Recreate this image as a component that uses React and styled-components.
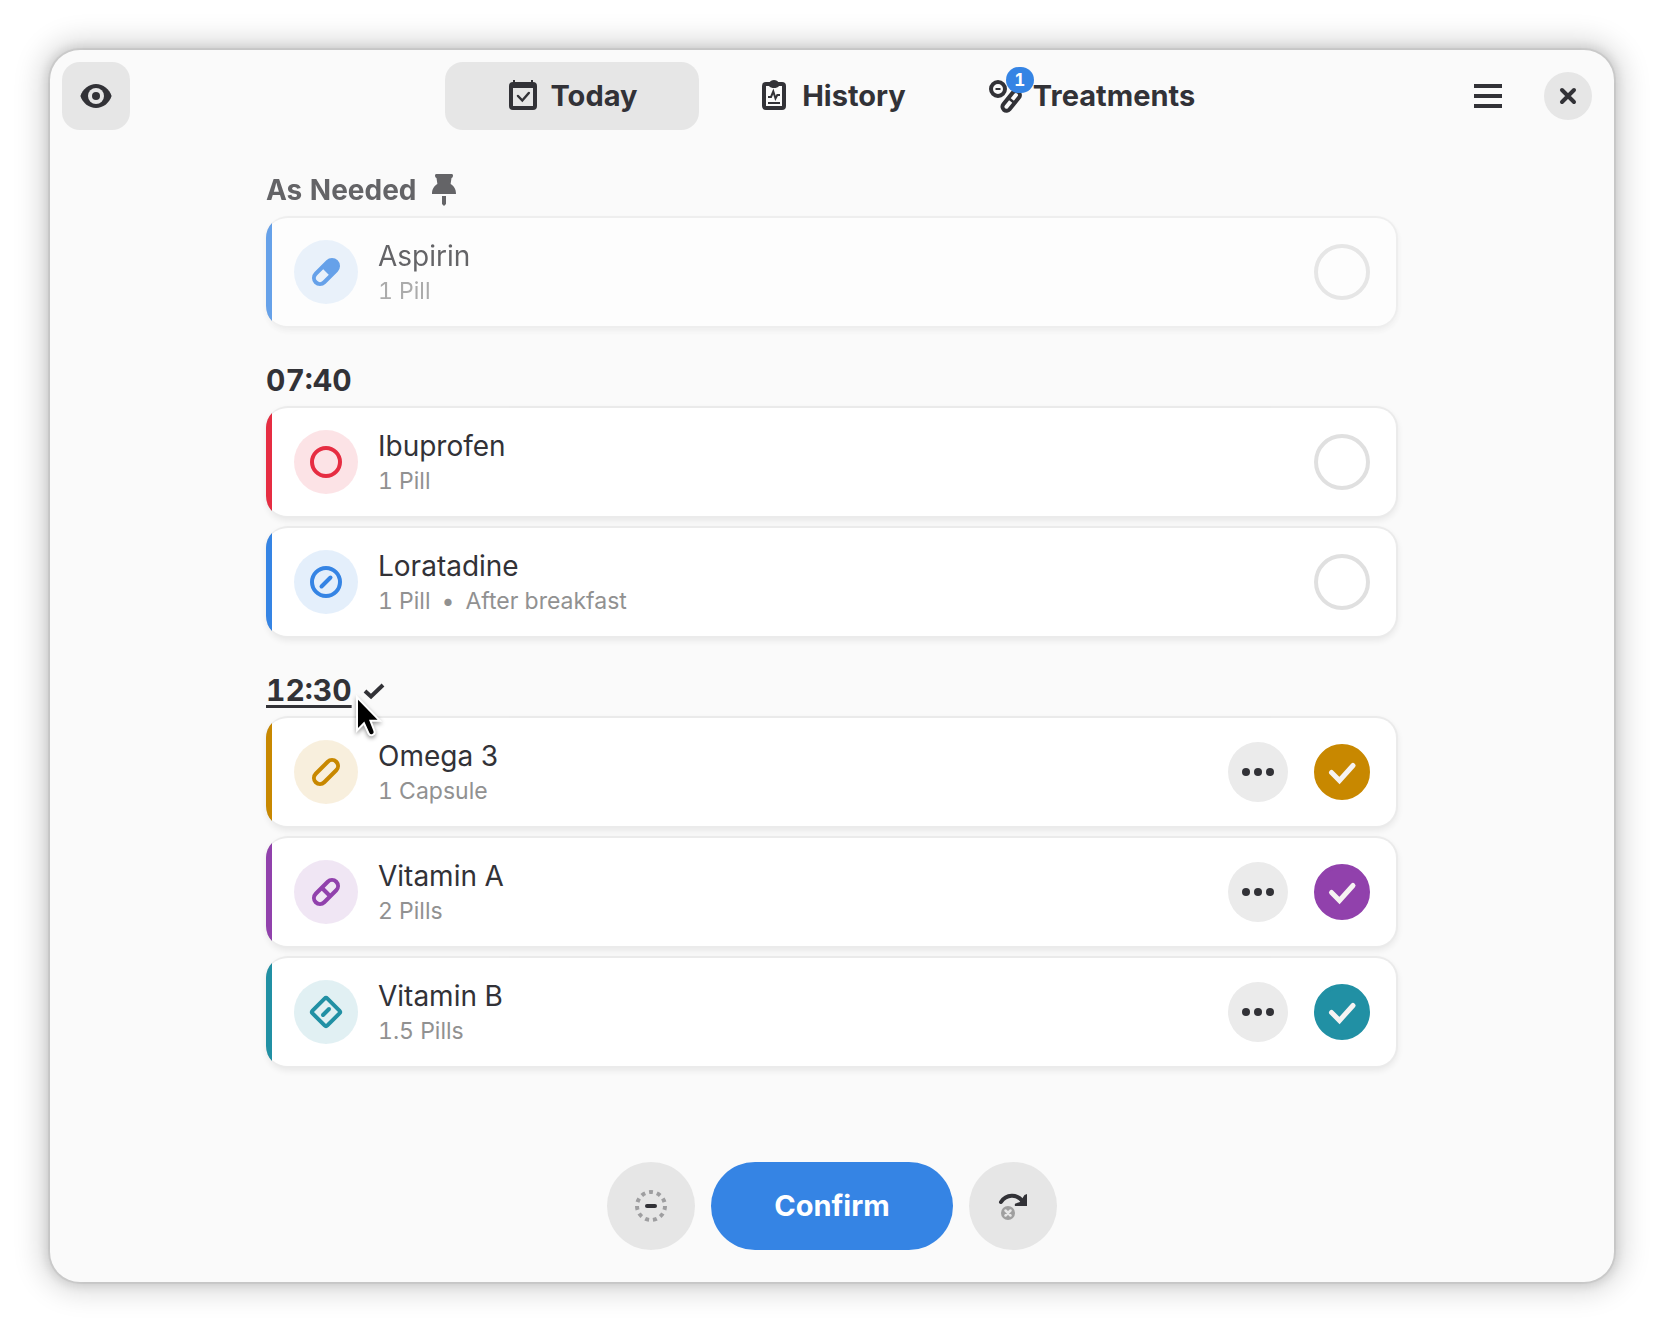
// External imports
import React, { useState } from "react"
import styled, { createGlobalStyle } from "styled-components"

// Constants
const font = `Inter, "Liberation Sans", sans-serif`

const colors = {
  text: "#323237",
  window: "#fafafa",
  button: "#e6e6e6",
  accent: "#3584e4",
}

const GlobalStyle = createGlobalStyle`
  * {
    box-sizing: border-box;
  }
  body {
    margin: 0;
    background: #ffffff;
    color: ${colors.text};
    font-family: ${font};
    font-size: 29px;
    line-height: 36px;
    font-variant-numeric: tabular-nums;
  }
  button {
    border: none;
    padding: 0;
    color: inherit;
    font: inherit;
    font-variant-numeric: inherit;
    cursor: pointer;
  }
  svg {
    display: block;
    flex: none;
    overflow: visible;
  }
`

// Styled components
const Page = styled.div`
  min-height: 100vh;
  padding: 50px;
  display: flex;
`

const Window = styled.div`
  flex: 1;
  display: flex;
  flex-direction: column;
  background: ${colors.window};
  border-radius: 30px;
  box-shadow:
    0 0 28px 10px rgba(0, 0, 0, 0.15),
    0 0 10px 4px rgba(0, 0, 0, 0.1),
    0 0 0 2px rgba(0, 0, 0, 0.05);
`

const Header = styled.header`
  display: grid;
  grid-template-columns: 1fr auto 1fr;
  align-items: center;
  padding: 12px;
`

const HeaderEnd = styled.div`
  display: flex;
  justify-content: flex-end;
  align-items: center;
  gap: 22px;
  padding-right: 10px;
`

const IconButton = styled.button`
  display: grid;
  place-items: center;
  width: 68px;
  height: 68px;
  border-radius: 18px;
  background: ${props => (props.$flat ? "none" : colors.button)};
`

const CloseButton = styled(IconButton)`
  width: 48px;
  height: 48px;
  border-radius: 50%;
`

const Tabs = styled.nav`
  display: flex;
  gap: 6px;
`

const Tab = styled.button`
  display: flex;
  align-items: center;
  justify-content: center;
  gap: 12px;
  width: 254px;
  height: 68px;
  border-radius: 18px;
  font-weight: 700;
  background: ${props => (props.$active ? colors.button : "none")};
`

const TabIcon = styled.span`
  position: relative;
`

const Badge = styled.span`
  position: absolute;
  top: -13px;
  left: 17px;
  width: 28px;
  height: 26px;
  border-radius: 13px;
  background: ${colors.accent};
  color: white;
  font-size: 17px;
  line-height: 26px;
  text-align: center;
`

const Content = styled.main`
  flex: 1;
  display: flex;
  flex-direction: column;
  gap: 34px;
  width: 100%;
  max-width: 1132px;
  margin: 0 auto;
  padding-top: 30px;
`

const Group = styled.section`
  display: flex;
  flex-direction: column;
  gap: 8px;
`

const GroupHeader = styled.div`
  position: relative;
  display: flex;
  align-items: center;
  gap: 12px;
  opacity: ${props => (props.$dim ? 0.75 : 1)};
`

const GroupTitle = styled.h2`
  margin: 0;
  font-size: ${props => (props.$pinned ? "28px" : "30px")};
  font-weight: 700;
  text-decoration: ${props => (props.$hovered ? "underline 3px" : "none")};
  text-underline-offset: 4px;
`

const Pointer = styled.svg`
  position: absolute;
  left: 84px;
  top: 20px;
  z-index: 1;
  filter: drop-shadow(0 2px 2px rgba(0, 0, 0, 0.4));
`

const List = styled.ul`
  display: flex;
  flex-direction: column;
  gap: 8px;
  margin: 0;
  padding: 0;
  list-style: none;
`

const Row = styled.li`
  display: flex;
  align-items: center;
  gap: 26px;
  height: 112px;
  padding: 0 26px 0 28px;
  border: 2px solid rgba(0, 0, 0, 0.08);
  border-left: none;
  border-radius: 22px;
  background:
    linear-gradient(${props => props.$color}, ${props => props.$color}) left / 6px 100% no-repeat border-box,
    white;
  box-shadow: 0 3px 6px rgba(0, 0, 0, 0.07);
  opacity: ${props => (props.$dim ? 0.75 : 1)};
`

const DoseIcon = styled.div`
  display: grid;
  place-items: center;
  width: 64px;
  height: 64px;
  border-radius: 50%;
  color: ${props => props.$color};
  background: ${props => props.$color}22;
`

const Info = styled.div`
  flex: 1;
  margin-left: -6px;
`

const Name = styled.div`
  font-size: 28px;
  line-height: 36px;
`

const Detail = styled.div`
  display: flex;
  gap: 11px;
  margin-top: 2px;
  color: #919191;
  font-size: 23px;
  line-height: 30px;
`

const MoreButton = styled(IconButton)`
  width: 60px;
  height: 60px;
  border-radius: 50%;
  background: #ebebeb;
`

const CheckBox = styled.label`
  display: grid;
  place-items: center;
  cursor: pointer;
  > * {
    grid-area: 1 / 1;
  }
  svg {
    pointer-events: none;
  }
`

const CheckInput = styled.input`
  appearance: none;
  margin: 0;
  width: 56px;
  height: 56px;
  border: 4px solid #e0e0e0;
  border-radius: 50%;
  &:checked {
    border-color: ${props => props.$color};
    background: ${props => props.$color};
  }
`

const Footer = styled.footer`
  display: flex;
  justify-content: center;
  gap: 16px;
  padding: 32px;
`

const RoundButton = styled(IconButton)`
  width: 88px;
  height: 88px;
  border-radius: 50%;
`

const ConfirmButton = styled.button`
  width: 242px;
  height: 88px;
  border-radius: 44px;
  background: ${colors.accent};
  color: white;
  font-weight: 700;
`

// Icons
const Icon = ({ children }) => (
  <svg width="32" height="32" viewBox="0 0 32 32" fill="none" stroke="currentColor" strokeWidth="4" aria-hidden="true">
    {children}
  </svg>
)

const EyeIcon = () => (
  <Icon>
    <g stroke="none">
      <path d="M.4 16C2.5 9 9 4 16 4s13.500 5 15.600 12C29.500 23 23 28 16 28S2.500 23 .4 16Z" fill="currentColor" />
      <circle cx="16" cy="16" r="8" fill={colors.button} />
      <circle cx="16" cy="16" r="4" fill="currentColor" />
    </g>
  </Icon>
)

const CalendarIcon = () => (
  <Icon>
    <path
      d="M6 0h2v2h16V0h2v2a4 4 0 0 1 4 4v20a4 4 0 0 1-4 4H6a4 4 0 0 1-4-4V6a4 4 0 0 1 4-4ZM6 8v18h20V8Z"
      fill="currentColor"
      fillRule="evenodd"
      stroke="none"
    />
    <path d="m11 16 4.300 4.500L21.800 13" strokeWidth="2.500" strokeLinecap="round" />
  </Icon>
)

const ClipboardIcon = () => (
  <Icon>
    <rect x="6" y="4" width="20" height="24" rx="2" />
    <path d="M11 3C12 1 14 0 16 0s4 1 5 3v3c-1 1.500-3 2-5 2s-4-.5-5-2Z" fill="currentColor" stroke="none" />
    <path d="M10 17h3l2.300-5.500 2.200 7 1.800-3.500H22M10 23h12" strokeWidth="2" />
  </Icon>
)

const TreatmentsIcon = () => (
  <Icon>
    <circle cx="9" cy="9" r="7" />
    <path d="M6.500 9h5" strokeWidth="2" />
    <g transform="translate(22.500 20.500) rotate(-51)">
      <rect x="-12" y="-4" width="23" height="8" rx="4" />
      <path d="M0-4V4" strokeWidth="2.500" />
    </g>
  </Icon>
)

const MenuIcon = () => (
  <Icon>
    <path d="M2 6h28M2 16h28M2 26h28" />
  </Icon>
)

const CloseIcon = () => (
  <Icon>
    <path d="m10 10 12 12M22 10 10 22" strokeLinecap="round" />
  </Icon>
)

const PinIcon = () => (
  <Icon>
    <path
      d="M8.500 0h15C24.500 0 25 .6 25 1.500S24.500 4 23.500 4L22.600 10C26 12 28 15 28 20H4C4 15 6 12 9.400 10L8.500 4C7.500 4 7 2.400 7 1.500S7.500 0 8.500 0ZM14 22h4v8l-2 2-2-2Z"
      fill="currentColor"
      stroke="none"
    />
  </Icon>
)

const SmallCheckIcon = () => (
  <svg width="20" height="16" viewBox="0 0 20 16" fill="none" stroke="currentColor" strokeWidth="4" aria-hidden="true">
    <path d="m1 9 6 5.500L19 3" />
  </svg>
)

const DotsIcon = () => (
  <Icon>
    <g fill="currentColor" stroke="none">
      <circle cx="4" cy="16" r="4" />
      <circle cx="16" cy="16" r="4" />
      <circle cx="28" cy="16" r="4" />
    </g>
  </Icon>
)

const UnmarkIcon = () => (
  <Icon>
    <circle
      cx="16"
      cy="16"
      r="14"
      pathLength="88"
      strokeDasharray="4 4"
      strokeDashoffset="2"
      transform="rotate(-90 16 16)"
      opacity="0.4"
    />
    <path d="M12 16h8" strokeLinecap="round" />
  </Icon>
)

const SkipIcon = () => (
  <Icon>
    <path d="M4 12C9 4.500 20 3 26 12" strokeLinecap="round" />
    <path d="M30 4v12H18.500c-1 0-1-2 0-2.500L23 12l4.500-7Z" fill="currentColor" stroke="none" />
    <circle cx="11" cy="23" r="7" fill="#9f9f9f" stroke="none" />
    <path d="m8.500 20.500 5 5M13.500 20.500l-5 5" stroke={colors.button} strokeWidth="2.500" strokeLinecap="round" />
  </Icon>
)

const Capsule = ({ children }) => (
  <Icon>
    <g transform="translate(16 16) rotate(-45)">
      <rect x="-14.500" y="-6" width="29" height="12" rx="6" />
      {children}
    </g>
  </Icon>
)

const doseIcons = {
  pill: (
    <Capsule>
      <path d="M0-6h8a6 6 0 0 1 0 12H0Z" fill="currentColor" stroke="none" />
    </Capsule>
  ),
  round: (
    <Icon>
      <circle cx="16" cy="16" r="14" />
    </Icon>
  ),
  scored: (
    <Icon>
      <circle cx="16" cy="16" r="14" />
      <path d="m11.500 20.500 9-9" strokeLinecap="round" />
    </Icon>
  ),
  capsule: <Capsule />,
  split: (
    <Capsule>
      <path d="M0-6V6" />
    </Capsule>
  ),
  diamond: (
    <Icon>
      <rect x="5.500" y="5.500" width="21" height="21" rx="2" transform="rotate(45 16 16)" />
      <path d="m13 19 6-6" strokeLinecap="round" />
    </Icon>
  ),
}

// Data
const groups = [
  {
    title: "As Needed",
    pinned: true,
    doses: [{ name: "Aspirin", details: ["1 Pill"], icon: "pill", color: "#3584e4" }],
  },
  {
    title: "07:40",
    doses: [
      { name: "Ibuprofen", details: ["1 Pill"], icon: "round", color: "#e62d42" },
      { name: "Loratadine", details: ["1 Pill", "After breakfast"], icon: "scored", color: "#3584e4" },
    ],
  },
  {
    title: "12:30",
    hovered: true,
    doses: [
      { name: "Omega 3", details: ["1 Capsule"], icon: "capsule", color: "#c88800", taken: true },
      { name: "Vitamin A", details: ["2 Pills"], icon: "split", color: "#9141ac", taken: true },
      { name: "Vitamin B", details: ["1.5 Pills"], icon: "diamond", color: "#2190a4", taken: true },
    ],
  },
]

const Dose = ({ dose, dim }) => {
  const [taken, setTaken] = useState(Boolean(dose.taken))

  return (
    <Row $color={dose.color} $dim={dim}>
      <DoseIcon $color={dose.color}>{doseIcons[dose.icon]}</DoseIcon>
      <Info>
        <Name>{dose.name}</Name>
        <Detail>
          {dose.details.map((detail, i) => (
            <React.Fragment key={detail}>
              {i > 0 && <span>•</span>}
              <span>{detail}</span>
            </React.Fragment>
          ))}
        </Detail>
      </Info>
      {taken && <MoreButton aria-label={`${dose.name} options`}><DotsIcon /></MoreButton>}
      <CheckBox>
        <CheckInput
          type="checkbox"
          aria-label={dose.name}
          checked={taken}
          onChange={() => setTaken(!taken)}
          $color={dose.color}
        />
        {taken && (
          <Icon>
            <path d="m5.500 16.500 8 8L27 9.500" stroke="#f6f3f2" strokeWidth="5" strokeLinecap="round" />
          </Icon>
        )}
      </CheckBox>
    </Row>
  )
}

const App = () => {
  const [tab, setTab] = useState("Today")

  return (
    <Page>
      <GlobalStyle />
      <Window>
        <Header>
          <IconButton aria-label="Show"><EyeIcon /></IconButton>
          <Tabs>
            <Tab $active={tab === "Today"} onClick={() => setTab("Today")}>
              <TabIcon><CalendarIcon /></TabIcon>
              Today
            </Tab>
            <Tab $active={tab === "History"} onClick={() => setTab("History")}>
              <TabIcon><ClipboardIcon /></TabIcon>
              History
            </Tab>
            <Tab $active={tab === "Treatments"} onClick={() => setTab("Treatments")}>
              <TabIcon>
                <TreatmentsIcon />
                <Badge>1</Badge>
              </TabIcon>
              Treatments
            </Tab>
          </Tabs>
          <HeaderEnd>
            <IconButton $flat aria-label="Menu"><MenuIcon /></IconButton>
            <CloseButton aria-label="Close"><CloseIcon /></CloseButton>
          </HeaderEnd>
        </Header>

        <Content>
          {groups.map(group => (
            <Group key={group.title}>
              <GroupHeader $dim={group.pinned}>
                <GroupTitle $pinned={group.pinned} $hovered={group.hovered}>{group.title}</GroupTitle>
                {group.pinned && <PinIcon />}
                {group.hovered && (
                  <>
                    <SmallCheckIcon />
                    <Pointer width="32" height="48" viewBox="0 0 32 48" aria-hidden="true">
                      <path
                        d="M8 7.700V36l6.300-6.500L19.500 41a2.200 2.200 0 0 0 4-1.800L19 27.700h8.500Z"
                        fill="black"
                        stroke="white"
                        strokeWidth="4"
                        paintOrder="stroke"
                      />
                    </Pointer>
                  </>
                )}
              </GroupHeader>
              <List>
                {group.doses.map(dose => (
                  <Dose key={dose.name} dose={dose} dim={group.pinned} />
                ))}
              </List>
            </Group>
          ))}
        </Content>

        <Footer>
          <RoundButton aria-label="Unmark"><UnmarkIcon /></RoundButton>
          <ConfirmButton>Confirm</ConfirmButton>
          <RoundButton aria-label="Skip"><SkipIcon /></RoundButton>
        </Footer>
      </Window>
    </Page>
  )
}

export default App
